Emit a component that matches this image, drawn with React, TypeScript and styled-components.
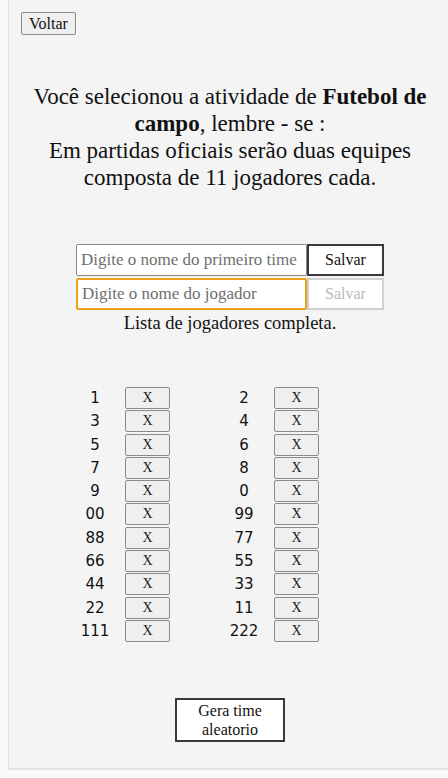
import styled, { createGlobalStyle } from 'styled-components'

const players: [string, string][] = [
  ['1', '2'],
  ['3', '4'],
  ['5', '6'],
  ['7', '8'],
  ['9', '0'],
  ['00', '99'],
  ['88', '77'],
  ['66', '55'],
  ['44', '33'],
  ['22', '11'],
  ['111', '222'],
]

const GlobalStyle = createGlobalStyle`
  *,
  *::before,
  *::after {
    box-sizing: border-box;
  }

  html,
  body,
  #root {
    margin: 0;
    height: 100%;
  }

  html,
  body {
    overflow: hidden;
  }

  body {
    padding: 0 0 8px 8px;
    background: #fafafa;
    font-family: 'Liberation Serif', 'DejaVu Serif', serif;
    color: #111;
  }

  button,
  input {
    font: inherit;
  }
`

function App() {
  return (
    <Page>
      <GlobalStyle />
      <TopBar>
        <BackButton>Voltar</BackButton>
      </TopBar>

      <Intro>
        Você selecionou a atividade de <strong>Futebol de campo</strong>, lembre - se :
        <br />
        Em partidas oficiais serão duas equipes composta de 11 jogadores cada.
      </Intro>

      <Form>
        <FormRow>
          <TextInput placeholder="Digite o nome do primeiro time" />
          <SaveButton>Salvar</SaveButton>
        </FormRow>
        <FormRow>
          <TextInput focused placeholder="Digite o nome do jogador" />
          <SaveButton disabled>Salvar</SaveButton>
        </FormRow>
        <Notice>Lista de jogadores completa.</Notice>
      </Form>

      <PlayerGrid>
        {players.flat().map((name, index) => (
          <PlayerItem key={index}>
            <PlayerName>{name}</PlayerName>
            <RemoveButton>X</RemoveButton>
          </PlayerItem>
        ))}
      </PlayerGrid>

      <Footer>
        <RandomButton>
          Gera time
          <br />
          aleatorio
        </RandomButton>
      </Footer>
    </Page>
  )
}

export default App

const Page = styled.div`
  height: 100%;
  display: flex;
  flex-direction: column;
  padding: 12px 9px 0 12px;
  background: #f4f4f4;
  border-left: 1px solid #e2e2e2;
  border-bottom: 2px solid #e2e2e2;
`

const TopBar = styled.div`
  display: flex;
`

const BackButton = styled.button`
  height: 23px;
  padding: 0 7px;
  font-size: 16px;
  color: #111;
  background: #efefef;
  border: 1px solid #8a8a8a;
  border-radius: 2px;
`

const Intro = styled.p`
  margin: 48px auto 0;
  width: 410px;
  font-size: 23px;
  line-height: 27px;
  text-align: center;
  color: #111;

  strong {
    font-weight: 700;
  }
`

const Form = styled.div`
  margin-top: 53px;
  display: flex;
  flex-direction: column;
  align-items: center;
  gap: 2px;
`

const FormRow = styled.div`
  display: flex;
`

const TextInput = styled.input<{ focused?: boolean }>`
  width: 231px;
  height: 32px;
  padding: 0 4px;
  font-size: 17px;
  background: #fff;
  border: ${({ focused }) => (focused ? '2px solid #e8a317' : '1px solid #8a8a8a')};
  border-radius: 2px;
  outline: none;

  &::placeholder {
    color: #6f6f6f;
  }
`

const SaveButton = styled.button`
  width: 77px;
  height: 32px;
  font-size: 16px;
  color: #111;
  background: #fff;
  border: 2px solid #3a3a3a;

  &:disabled {
    color: #bbb;
    border-color: #d0d0d0;
  }
`

const Notice = styled.p`
  margin: 0;
  font-size: 18.5px;
  line-height: 22px;
  color: #111;
`

const PlayerGrid = styled.div`
  margin: 53px 0 0 44px;
  display: grid;
  grid-template-columns: repeat(2, 149px);
  row-gap: 1.3px;
`

const PlayerItem = styled.div`
  display: flex;
  align-items: center;
`

const PlayerName = styled.span`
  width: 60px;
  text-align: center;
  font-family: 'DejaVu Sans', sans-serif;
  font-size: 15px;
  color: #111;
`

const RemoveButton = styled.button`
  width: 45px;
  height: 22px;
  padding: 0;
  font-size: 14px;
  color: #222;
  background: #efefef;
  border: 1px solid #8a8a8a;
  border-radius: 2px;
`

const Footer = styled.div`
  margin-top: 56px;
  display: flex;
  justify-content: center;
`

const RandomButton = styled.button`
  width: 110px;
  height: 44px;
  padding: 0;
  font-size: 16px;
  line-height: 19px;
  color: #111;
  background: #fff;
  border: 2px solid #3a3a3a;
`
